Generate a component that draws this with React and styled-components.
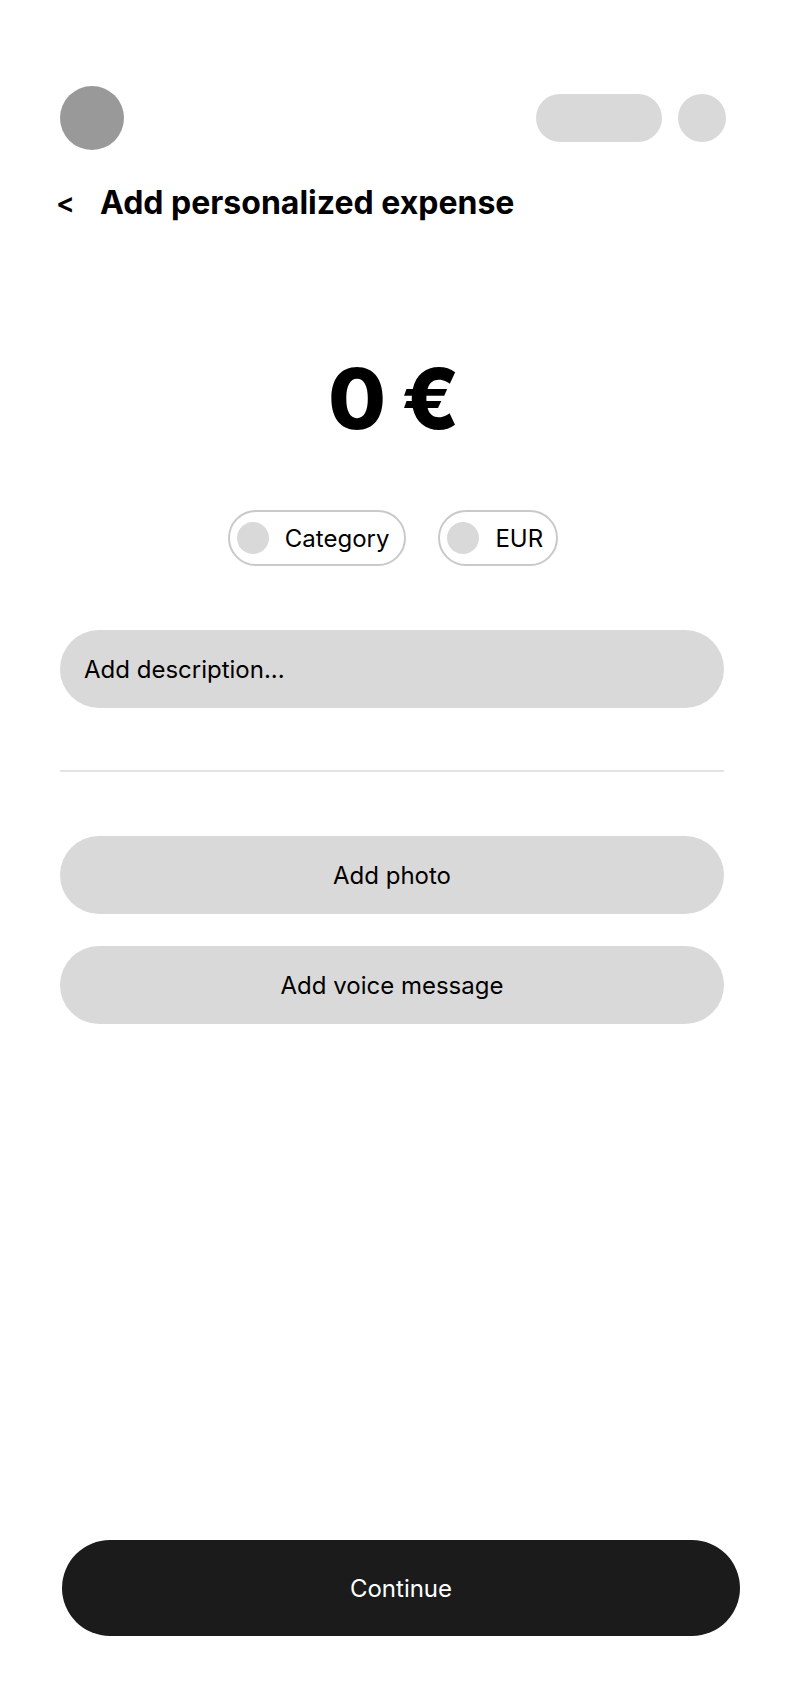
import React from "react";
import styled, { createGlobalStyle } from "styled-components";

const GlobalStyle = createGlobalStyle`
  * { box-sizing: border-box; }
  html, body { margin: 0; padding: 0; background: #ffffff; }
  body { font-family: "Inter", "Liberation Sans", sans-serif; color: #000000; }
`;

const Page = styled.div`
  display: flex;
  flex-direction: column;
  min-height: 1704px;
  width: 786px;
  background: #ffffff;
`;

const Main = styled.main`
  display: flex;
  flex-direction: column;
  padding: 86px 60px 0;
`;

const TopBar = styled.header`
  display: flex;
  align-items: center;
  justify-content: space-between;
`;

const Avatar = styled.div`
  width: 64px;
  height: 64px;
  border-radius: 50%;
  background: #999999;
`;

const TopActions = styled.div`
  display: flex;
  align-items: center;
  gap: 16px;
`;

const Placeholder = styled.div`
  width: ${(p) => p.$w}px;
  height: 48px;
  border-radius: 24px;
  background: #d9d9d9;
`;

const TitleRow = styled.div`
  display: flex;
  align-items: center;
  margin-top: 36px;
  height: 34px;
`;

const Back = styled.button`
  border: 0;
  background: none;
  padding: 0;
  margin-left: -4px;
  width: 44px;
  text-align: left;
  font-family: inherit;
  font-size: 28px;
  font-weight: 600;
  color: #000000;
  cursor: pointer;
`;

const Title = styled.h1`
  margin: 0;
  font-size: 32px;
  font-weight: 700;
  line-height: 34px;
`;

const Amount = styled.div`
  margin-top: 129px;
  text-align: center;
  font-size: 84px;
  font-weight: 800;
  line-height: 100px;
  letter-spacing: -1.5px;
`;

const Chips = styled.div`
  display: flex;
  justify-content: center;
  gap: 32px;
  margin-top: 61px;
`;

const Chip = styled.button`
  display: flex;
  align-items: center;
  gap: 16px;
  height: 56px;
  padding: 0 ${(p) => (p.$tight ? 13 : 15)}px 0 7px;
  border: 2px solid #c9c9c9;
  border-radius: 28px;
  background: #ffffff;
  font-family: inherit;
  font-size: 24px;
  color: #000000;
`;

const Dot = styled.span`
  width: 32px;
  height: 32px;
  border-radius: 50%;
  background: #d9d9d9;
`;

const Field = styled.div`
  display: flex;
  align-items: center;
  height: 78px;
  margin: 64px 2px 0 0;
  padding: 0 24px;
  border-radius: 39px;
  background: #d9d9d9;
  font-size: 24px;
  color: #000000;
`;

const Divider = styled.hr`
  margin: 62px 2px 0 0;
  border: 0;
  height: 2px;
  background: #e3e3e3;
`;

const Actions = styled.div`
  display: flex;
  flex-direction: column;
  gap: 32px;
  margin: 64px 2px 0 0;
`;

const Action = styled.button`
  height: 78px;
  border: 0;
  border-radius: 39px;
  background: #d9d9d9;
  font-family: inherit;
  font-size: 24px;
  color: #000000;
`;

const Footer = styled.footer`
  margin-top: auto;
  padding: 0 46px 68px 62px;
`;

const Continue = styled.button`
  width: 100%;
  height: 96px;
  border: 0;
  border-radius: 48px;
  background: #1b1b1b;
  font-family: inherit;
  font-size: 24px;
  color: #ffffff;
`;

export default function App() {
  return (
    <>
      <GlobalStyle />
      <Page>
        <Main>
          <TopBar>
            <Avatar />
            <TopActions>
              <Placeholder $w={126} />
              <Placeholder $w={48} />
            </TopActions>
          </TopBar>
          <TitleRow>
            <Back>&lt;</Back>
            <Title>Add personalized expense</Title>
          </TitleRow>
          <Amount>0 €</Amount>
          <Chips>
            <Chip>
              <Dot />
              Category
            </Chip>
            <Chip $tight>
              <Dot />
              EUR
            </Chip>
          </Chips>
          <Field>Add description...</Field>
          <Divider />
          <Actions>
            <Action>Add photo</Action>
            <Action>Add voice message</Action>
          </Actions>
        </Main>
        <Footer>
          <Continue>Continue</Continue>
        </Footer>
      </Page>
    </>
  );
}
